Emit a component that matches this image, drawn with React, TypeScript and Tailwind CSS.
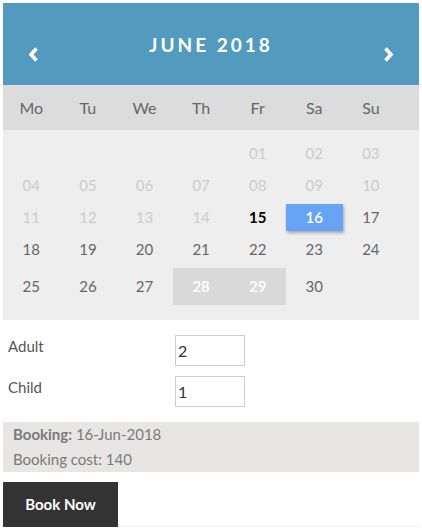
import React from "react";

type Day = { n: string; kind: "off" | "on" | "today" | "picked" | "range" | "empty" };

const weeks: Day[][] = [
  [
    { n: "", kind: "empty" },
    { n: "", kind: "empty" },
    { n: "", kind: "empty" },
    { n: "", kind: "empty" },
    { n: "01", kind: "off" },
    { n: "02", kind: "off" },
    { n: "03", kind: "off" },
  ],
  ["04", "05", "06", "07", "08", "09", "10"].map((n) => ({ n, kind: "off" as const })),
  [
    { n: "11", kind: "off" },
    { n: "12", kind: "off" },
    { n: "13", kind: "off" },
    { n: "14", kind: "off" },
    { n: "15", kind: "today" },
    { n: "16", kind: "picked" },
    { n: "17", kind: "on" },
  ],
  ["18", "19", "20", "21", "22", "23", "24"].map((n) => ({ n, kind: "on" as const })),
  [
    { n: "25", kind: "on" },
    { n: "26", kind: "on" },
    { n: "27", kind: "on" },
    { n: "28", kind: "range" },
    { n: "29", kind: "range" },
    { n: "30", kind: "on" },
    { n: "", kind: "empty" },
  ],
];

const days = ["Mo", "Tu", "We", "Th", "Fr", "Sa", "Su"];

function Cell({ d }: { d: Day }) {
  if (d.kind === "picked")
    return (
      <div className="flex h-full items-center justify-center py-[3px]">
        <span className="flex h-[27px] w-full items-center justify-center bg-[#68a4f4] font-semibold text-white shadow-[1px_2px_3px_rgba(0,0,0,0.3)]">
          {d.n}
        </span>
      </div>
    );
  const cls =
    d.kind === "off"
      ? "text-[#cccccc]"
      : d.kind === "today"
        ? "font-bold text-black"
        : d.kind === "range"
          ? "bg-[#d9d9d9] font-semibold text-white"
          : "text-[#666666]";
  return <div className={`flex h-full items-center justify-center ${cls}`}>{d.n}</div>;
}

export default function App() {
  return (
    <div className="w-[422px] bg-white px-[3px] pt-[3px] font-['Lato',sans-serif] text-[15px]">
      <div>
        <div className="flex h-[82px] items-start justify-between bg-[#529bbf] px-[25px] text-white">
          <svg width="11" height="15" viewBox="0 0 11 15" className="mt-[44px]">
            <path d="M8.5 1.5 L3 7.5 L8.5 13.5" fill="none" stroke="white" strokeWidth="3.6" />
          </svg>
          <h1 className="mt-[28px] text-[19px] font-bold tracking-[3px]">JUNE 2018</h1>
          <svg width="11" height="15" viewBox="0 0 11 15" className="mt-[44px]">
            <path d="M2.5 1.5 L8 7.5 L2.5 13.5" fill="none" stroke="white" strokeWidth="3.6" />
          </svg>
        </div>
        <div className="grid h-[45px] grid-cols-[repeat(7,56.6px)] items-center bg-[#dcdcdc] text-[16px] text-[#666666]">
          {days.map((d) => (
            <div key={d} className="text-center">
              {d}
            </div>
          ))}
        </div>
        <div className="bg-[#eeeeee] pt-[7px] pb-[15px] text-[15px]">
          {weeks.map((w, i) => (
            <div
              key={i}
              className={`grid grid-cols-[repeat(7,56.6px)] ${i === 4 ? "mt-[3px] h-[37px]" : "h-[32px]"}`}
            >
              {w.map((d, j) => (
                <Cell key={j} d={d} />
              ))}
            </div>
          ))}
        </div>
      </div>

      <div className="mt-[15px] flex flex-col gap-[10px] pl-[5px] text-[15px] text-[#555555]">
        <div className="flex items-start">
          <label className="w-[167px] pt-[1px] leading-[20px]">Adult</label>
          <input
            defaultValue="2"
            className="h-[31px] w-[70px] border border-[#cccccc] px-[2px] text-[16px] text-[#333333] outline-none"
          />
        </div>
        <div className="flex items-start">
          <label className="w-[167px] pt-[1px] leading-[20px]">Child</label>
          <input
            defaultValue="1"
            className="h-[31px] w-[70px] border border-[#cccccc] px-[2px] text-[16px] text-[#333333] outline-none"
          />
        </div>
      </div>

      <div className="mt-[15px] bg-[#e8e6e4] px-[10px] text-[15px] leading-[25px] text-[#7a7a7a]">
        <p>
          <b>Booking:</b> 16-Jun-2018
        </p>
        <p>Booking cost: 140</p>
      </div>

      <div className="mt-[10px] flex items-end">
        <button className="h-[45px] w-[115px] bg-[#333333] text-[15px] font-bold text-white">
          Book Now
        </button>
        <div className="flex-1 border-b border-[#f0f0f0]" />
      </div>
    </div>
  );
}
